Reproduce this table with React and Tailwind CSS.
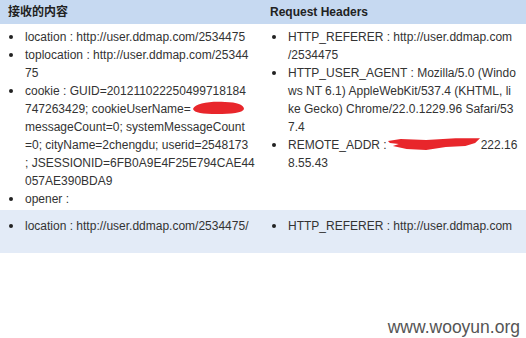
import React from 'react';

const font = { fontFamily: '"Liberation Sans", Arial, "Noto Sans CJK SC", sans-serif' };

// lines are given one by one so they break where the original page broke them
const Item = ({ lines }) => (
  <li className="flex">
    <span className="w-[25px] shrink-0 pl-[9px]">
      <span className="inline-block size-[4px] rounded-full bg-[#222] align-middle mb-[2px]" />
    </span>
    <div className="whitespace-nowrap">
      {lines.map((l, i) => (
        <div key={i}>{l}</div>
      ))}
    </div>
  </li>
);

const SmallBlob = () => (
  <svg width="54" height="14" viewBox="0 0 54 14" className="inline-block align-middle -mt-[3px]">
    <path d="M2 8 C4 2, 20 0, 34 1 C46 1, 53 4, 53 8 C52 12, 40 13, 26 13 C12 13, 3 12, 2 8 Z" fill="#e8262b" />
  </svg>
);

const BigBlob = () => (
  <svg width="94" height="14" viewBox="0 0 96 14" className="inline-block align-middle -mt-[3px]">
    <path d="M1 4 L14 2 L40 3 L70 1 L95 1 L90 6 L80 9 L60 10 L40 13 L20 12 L6 9 L12 7 L3 6 Z" fill="#e8262b" />
  </svg>
);

export default function App() {
  return (
    <div className="w-[526px] h-[338px] bg-white text-[12px] leading-[18px] text-[#333] flex flex-col" style={font}>
      <div className="flex h-[24px] bg-[#c6d9f1] font-bold text-[12px] text-[#222] items-center">
        <div className="w-[263px] pl-[8px]">接收的内容</div>
        <div className="pl-[7px]">Request Headers</div>
      </div>
      <div className="flex pt-[4px] pb-[2px]">
        <ul className="w-[263px]">
          <Item lines={['location : http://user.ddmap.com/2534475']} />
          <Item lines={['toplocation : http://user.ddmap.com/25344', '75']} />
          <Item
            lines={[
              'cookie : GUID=201211022250499718184',
              <>747263429; cookieUserName=<SmallBlob /></>,
              'messageCount=0; systemMessageCount',
              '=0; cityName=2chengdu; userid=2548173',
              '; JSESSIONID=6FB0A9E4F25E794CAE44',
              '057AE390BDA9',
            ]}
          />
          <Item lines={['opener :']} />
        </ul>
        <ul>
          <Item lines={['HTTP_REFERER : http://user.ddmap.com', '/2534475']} />
          <Item
            lines={[
              'HTTP_USER_AGENT : Mozilla/5.0 (Windo',
              'ws NT 6.1) AppleWebKit/537.4 (KHTML, li',
              'ke Gecko) Chrome/22.0.1229.96 Safari/53',
              '7.4',
            ]}
          />
          <Item lines={[<>REMOTE_ADDR :<BigBlob />222.16</>, '8.55.43']} />
        </ul>
      </div>
      <div className="flex bg-[#e3ebf7] pt-[7px] h-[43px]">
        <ul className="w-[263px]">
          <Item lines={['location : http://user.ddmap.com/2534475/']} />
        </ul>
        <ul>
          <Item lines={['HTTP_REFERER : http://user.ddmap.com']} />
        </ul>
      </div>
      <div className="flex-1 flex items-end justify-end pr-[6px]">
        <span className="text-[17.5px] text-[#555] leading-[22px]">www.wooyun.org</span>
      </div>
    </div>
  );
}
